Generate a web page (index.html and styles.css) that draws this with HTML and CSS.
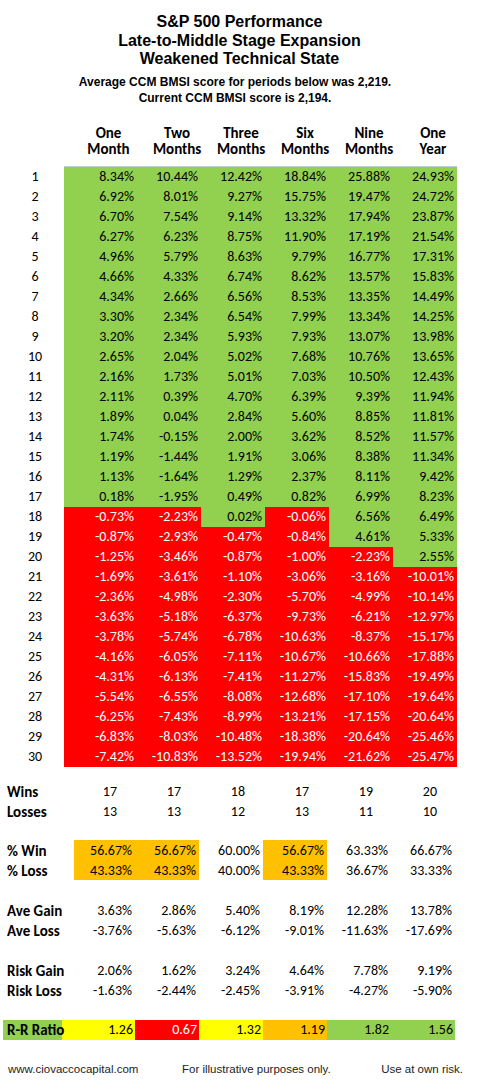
FILE: index.html
```html
<!DOCTYPE html>
<html lang="en">
<head>
    <meta charset="UTF-8">
    <meta name="viewport" content="width=device-width, initial-scale=1.0">
    <title>S&amp;P 500 Performance - Weakened Technical State</title>
    <link rel="stylesheet" href="styles.css">
</head>
<body>
    <div class="sheet">
        <h1 class="title">S&amp;P 500 Performance<br>Late-to-Middle Stage Expansion<br>Weakened Technical State</h1>
        <p class="subtitle">Average CCM BMSI score for periods below was 2,219.<br>Current CCM BMSI score is 2,194.</p>

        <table class="perf">
            <colgroup>
                <col class="col-label">
                <col class="col-first">
                <col class="col-num"><col class="col-num"><col class="col-num"><col class="col-num"><col class="col-num">
            </colgroup>
            <thead>
                <tr>
                    <th></th>
                    <th>One<br>Month</th>
                    <th>Two<br>Months</th>
                    <th>Three<br>Months</th>
                    <th>Six<br>Months</th>
                    <th>Nine<br>Months</th>
                    <th>One<br>Year</th>
                </tr>
            </thead>
            <tbody>
                <tr><td class="n">1</td><td class="g">8.34%</td><td class="g">10.44%</td><td class="g">12.42%</td><td class="g">18.84%</td><td class="g">25.88%</td><td class="g">24.93%</td></tr>
                <tr><td class="n">2</td><td class="g">6.92%</td><td class="g">8.01%</td><td class="g">9.27%</td><td class="g">15.75%</td><td class="g">19.47%</td><td class="g">24.72%</td></tr>
                <tr><td class="n">3</td><td class="g">6.70%</td><td class="g">7.54%</td><td class="g">9.14%</td><td class="g">13.32%</td><td class="g">17.94%</td><td class="g">23.87%</td></tr>
                <tr><td class="n">4</td><td class="g">6.27%</td><td class="g">6.23%</td><td class="g">8.75%</td><td class="g">11.90%</td><td class="g">17.19%</td><td class="g">21.54%</td></tr>
                <tr><td class="n">5</td><td class="g">4.96%</td><td class="g">5.79%</td><td class="g">8.63%</td><td class="g">9.79%</td><td class="g">16.77%</td><td class="g">17.31%</td></tr>
                <tr><td class="n">6</td><td class="g">4.66%</td><td class="g">4.33%</td><td class="g">6.74%</td><td class="g">8.62%</td><td class="g">13.57%</td><td class="g">15.83%</td></tr>
                <tr><td class="n">7</td><td class="g">4.34%</td><td class="g">2.66%</td><td class="g">6.56%</td><td class="g">8.53%</td><td class="g">13.35%</td><td class="g">14.49%</td></tr>
                <tr><td class="n">8</td><td class="g">3.30%</td><td class="g">2.34%</td><td class="g">6.54%</td><td class="g">7.99%</td><td class="g">13.34%</td><td class="g">14.25%</td></tr>
                <tr><td class="n">9</td><td class="g">3.20%</td><td class="g">2.34%</td><td class="g">5.93%</td><td class="g">7.93%</td><td class="g">13.07%</td><td class="g">13.98%</td></tr>
                <tr><td class="n">10</td><td class="g">2.65%</td><td class="g">2.04%</td><td class="g">5.02%</td><td class="g">7.68%</td><td class="g">10.76%</td><td class="g">13.65%</td></tr>
                <tr><td class="n">11</td><td class="g">2.16%</td><td class="g">1.73%</td><td class="g">5.01%</td><td class="g">7.03%</td><td class="g">10.50%</td><td class="g">12.43%</td></tr>
                <tr><td class="n">12</td><td class="g">2.11%</td><td class="g">0.39%</td><td class="g">4.70%</td><td class="g">6.39%</td><td class="g">9.39%</td><td class="g">11.94%</td></tr>
                <tr><td class="n">13</td><td class="g">1.89%</td><td class="g">0.04%</td><td class="g">2.84%</td><td class="g">5.60%</td><td class="g">8.85%</td><td class="g">11.81%</td></tr>
                <tr><td class="n">14</td><td class="g">1.74%</td><td class="g">-0.15%</td><td class="g">2.00%</td><td class="g">3.62%</td><td class="g">8.52%</td><td class="g">11.57%</td></tr>
                <tr><td class="n">15</td><td class="g">1.19%</td><td class="g">-1.44%</td><td class="g">1.91%</td><td class="g">3.06%</td><td class="g">8.38%</td><td class="g">11.34%</td></tr>
                <tr><td class="n">16</td><td class="g">1.13%</td><td class="g">-1.64%</td><td class="g">1.29%</td><td class="g">2.37%</td><td class="g">8.11%</td><td class="g">9.42%</td></tr>
                <tr><td class="n">17</td><td class="g">0.18%</td><td class="g">-1.95%</td><td class="g">0.49%</td><td class="g">0.82%</td><td class="g">6.99%</td><td class="g">8.23%</td></tr>
                <tr><td class="n">18</td><td class="r">-0.73%</td><td class="r">-2.23%</td><td class="g">0.02%</td><td class="r">-0.06%</td><td class="g">6.56%</td><td class="g">6.49%</td></tr>
                <tr><td class="n">19</td><td class="r">-0.87%</td><td class="r">-2.93%</td><td class="r">-0.47%</td><td class="r">-0.84%</td><td class="g">4.61%</td><td class="g">5.33%</td></tr>
                <tr><td class="n">20</td><td class="r">-1.25%</td><td class="r">-3.46%</td><td class="r">-0.87%</td><td class="r">-1.00%</td><td class="r">-2.23%</td><td class="g">2.55%</td></tr>
                <tr><td class="n">21</td><td class="r">-1.69%</td><td class="r">-3.61%</td><td class="r">-1.10%</td><td class="r">-3.06%</td><td class="r">-3.16%</td><td class="r">-10.01%</td></tr>
                <tr><td class="n">22</td><td class="r">-2.36%</td><td class="r">-4.98%</td><td class="r">-2.30%</td><td class="r">-5.70%</td><td class="r">-4.99%</td><td class="r">-10.14%</td></tr>
                <tr><td class="n">23</td><td class="r">-3.63%</td><td class="r">-5.18%</td><td class="r">-6.37%</td><td class="r">-9.73%</td><td class="r">-6.21%</td><td class="r">-12.97%</td></tr>
                <tr><td class="n">24</td><td class="r">-3.78%</td><td class="r">-5.74%</td><td class="r">-6.78%</td><td class="r">-10.63%</td><td class="r">-8.37%</td><td class="r">-15.17%</td></tr>
                <tr><td class="n">25</td><td class="r">-4.16%</td><td class="r">-6.05%</td><td class="r">-7.11%</td><td class="r">-10.67%</td><td class="r">-10.66%</td><td class="r">-17.88%</td></tr>
                <tr><td class="n">26</td><td class="r">-4.31%</td><td class="r">-6.13%</td><td class="r">-7.41%</td><td class="r">-11.27%</td><td class="r">-15.83%</td><td class="r">-19.49%</td></tr>
                <tr><td class="n">27</td><td class="r">-5.54%</td><td class="r">-6.55%</td><td class="r">-8.08%</td><td class="r">-12.68%</td><td class="r">-17.10%</td><td class="r">-19.64%</td></tr>
                <tr><td class="n">28</td><td class="r">-6.25%</td><td class="r">-7.43%</td><td class="r">-8.99%</td><td class="r">-13.21%</td><td class="r">-17.15%</td><td class="r">-20.64%</td></tr>
                <tr><td class="n">29</td><td class="r">-6.83%</td><td class="r">-8.03%</td><td class="r">-10.48%</td><td class="r">-18.38%</td><td class="r">-20.64%</td><td class="r">-25.46%</td></tr>
                <tr><td class="n">30</td><td class="r">-7.42%</td><td class="r">-10.83%</td><td class="r">-13.52%</td><td class="r">-19.94%</td><td class="r">-21.62%</td><td class="r">-25.47%</td></tr>
            </tbody>
        </table>

        <table class="stats">
            <colgroup>
                <col class="col-slabel">
                <col class="col-first">
                <col class="col-num"><col class="col-num"><col class="col-num"><col class="col-num"><col class="col-num">
            </colgroup>
            <tr class="gap gap-first"><td colspan="7"></td></tr>
            <tr class="count"><th>Wins</th><td>17</td><td>17</td><td>18</td><td>17</td><td>19</td><td>20</td></tr>
            <tr class="count"><th>Losses</th><td>13</td><td>13</td><td>12</td><td>13</td><td>11</td><td>10</td></tr>
            <tr class="gap gap-mid"><td colspan="7"></td></tr>
            <tr><th>% Win</th><td class="o o-first">56.67%</td><td class="o">56.67%</td><td>60.00%</td><td class="o">56.67%</td><td>63.33%</td><td>66.67%</td></tr>
            <tr><th>% Loss</th><td class="o o-first">43.33%</td><td class="o">43.33%</td><td>40.00%</td><td class="o">43.33%</td><td>36.67%</td><td>33.33%</td></tr>
            <tr class="gap"><td colspan="7"></td></tr>
            <tr><th>Ave Gain</th><td>3.63%</td><td>2.86%</td><td>5.40%</td><td>8.19%</td><td>12.28%</td><td>13.78%</td></tr>
            <tr><th>Ave Loss</th><td>-3.76%</td><td>-5.63%</td><td>-6.12%</td><td>-9.01%</td><td>-11.63%</td><td>-17.69%</td></tr>
            <tr class="gap"><td colspan="7"></td></tr>
            <tr><th>Risk Gain</th><td>2.06%</td><td>1.62%</td><td>3.24%</td><td>4.64%</td><td>7.78%</td><td>9.19%</td></tr>
            <tr><th>Risk Loss</th><td>-1.63%</td><td>-2.44%</td><td>-2.45%</td><td>-3.91%</td><td>-4.27%</td><td>-5.90%</td></tr>
            <tr class="gap"><td colspan="7"></td></tr>
            <tr class="ratio"><th class="g">R-R Ratio</th><td class="y">1.26</td><td class="r">0.67</td><td class="y">1.32</td><td class="o">1.19</td><td class="g">1.82</td><td class="g">1.56</td></tr>
        </table>

        <div class="footer">
            <span>www.ciovaccocapital.com</span>
            <span>For illustrative purposes only.</span>
            <span class="right">Use at own risk.</span>
        </div>
    </div>
</body>
</html>
```

FILE: styles.css
```css
body {
    margin: 0;
    background: #ffffff;
    color: #000000;
}
.sheet {
    width: 479px;
    padding-top: 13px;
}
.title {
    margin: 0;
    font-family: 'Liberation Sans', Arial, sans-serif;
    font-size: 16px;
    line-height: 18.7px;
    font-weight: bold;
    text-align: center;
}
.subtitle {
    margin: 5px 0 0;
    padding-right: 9px;
    font-family: 'Liberation Sans', Arial, sans-serif;
    font-size: 12px;
    line-height: 16px;
    font-weight: bold;
    text-align: center;
}
table {
    border-collapse: collapse;
    table-layout: fixed;
    font-family: 'Carlito', 'Lato', sans-serif;
    font-size: 14px;
}
td, th {
    padding: 0;
}
.col-label { width: 64px; }
.col-first { width: 73px; }
.col-num { width: 64px; }
.col-slabel { width: 59px; }

.perf {
    width: 457px;
    margin-top: 18.7px;
}
.perf thead th {
    font-size: 15px;
    line-height: 16.6px;
    font-weight: bold;
    text-align: center;
    padding: 0 0 8.4px 16px;
    vertical-align: bottom;
    border-bottom: 1px solid #c5cdd8;
}
.perf thead th:first-child {
    border-bottom: none;
}
.perf tbody td {
    height: 20px;
    line-height: 20px;
    text-align: right;
    padding-right: 3px;
}
.perf td.n {
    text-align: center;
    padding: 0 0 0 6px;
}
.g { background: #92d050; }
.r { background: #ff0000; color: #ffffff; }
.o { background: #ffc000; }
.y { background: #ffff00; }

.stats {
    width: 452px;
    margin-left: 3px;
}
.stats tr {
    height: 20px;
}
.stats th {
    font-size: 15px;
    font-weight: bold;
    text-align: left;
    padding-left: 4px;
    white-space: nowrap;
    line-height: 18px;
    vertical-align: bottom;
}
.stats td {
    text-align: right;
    padding-right: 3px;
    line-height: 18px;
    vertical-align: bottom;
}
.stats .count td {
    padding-right: 18px;
}
.stats .gap { height: 20px; }
.stats .gap-first { height: 14px; }
.stats .gap-mid { height: 19px; }
.stats td.o-first {
    background: linear-gradient(to right, transparent 12px, #ffc000 12px);
}
.stats .ratio th,
.stats .ratio td {
    line-height: 20px;
    vertical-align: middle;
}
.stats .ratio td {
    padding-right: 2px;
}

.footer {
    display: grid;
    grid-template-columns: 174px 1fr auto;
    margin-top: 22px;
    padding: 0 16px 0 8px;
    font-family: 'Liberation Sans', Arial, sans-serif;
    font-size: 11.5px;
    line-height: 14px;
    color: #1c1c24;
    white-space: nowrap;
}
.footer .right {
    text-align: right;
}
```
